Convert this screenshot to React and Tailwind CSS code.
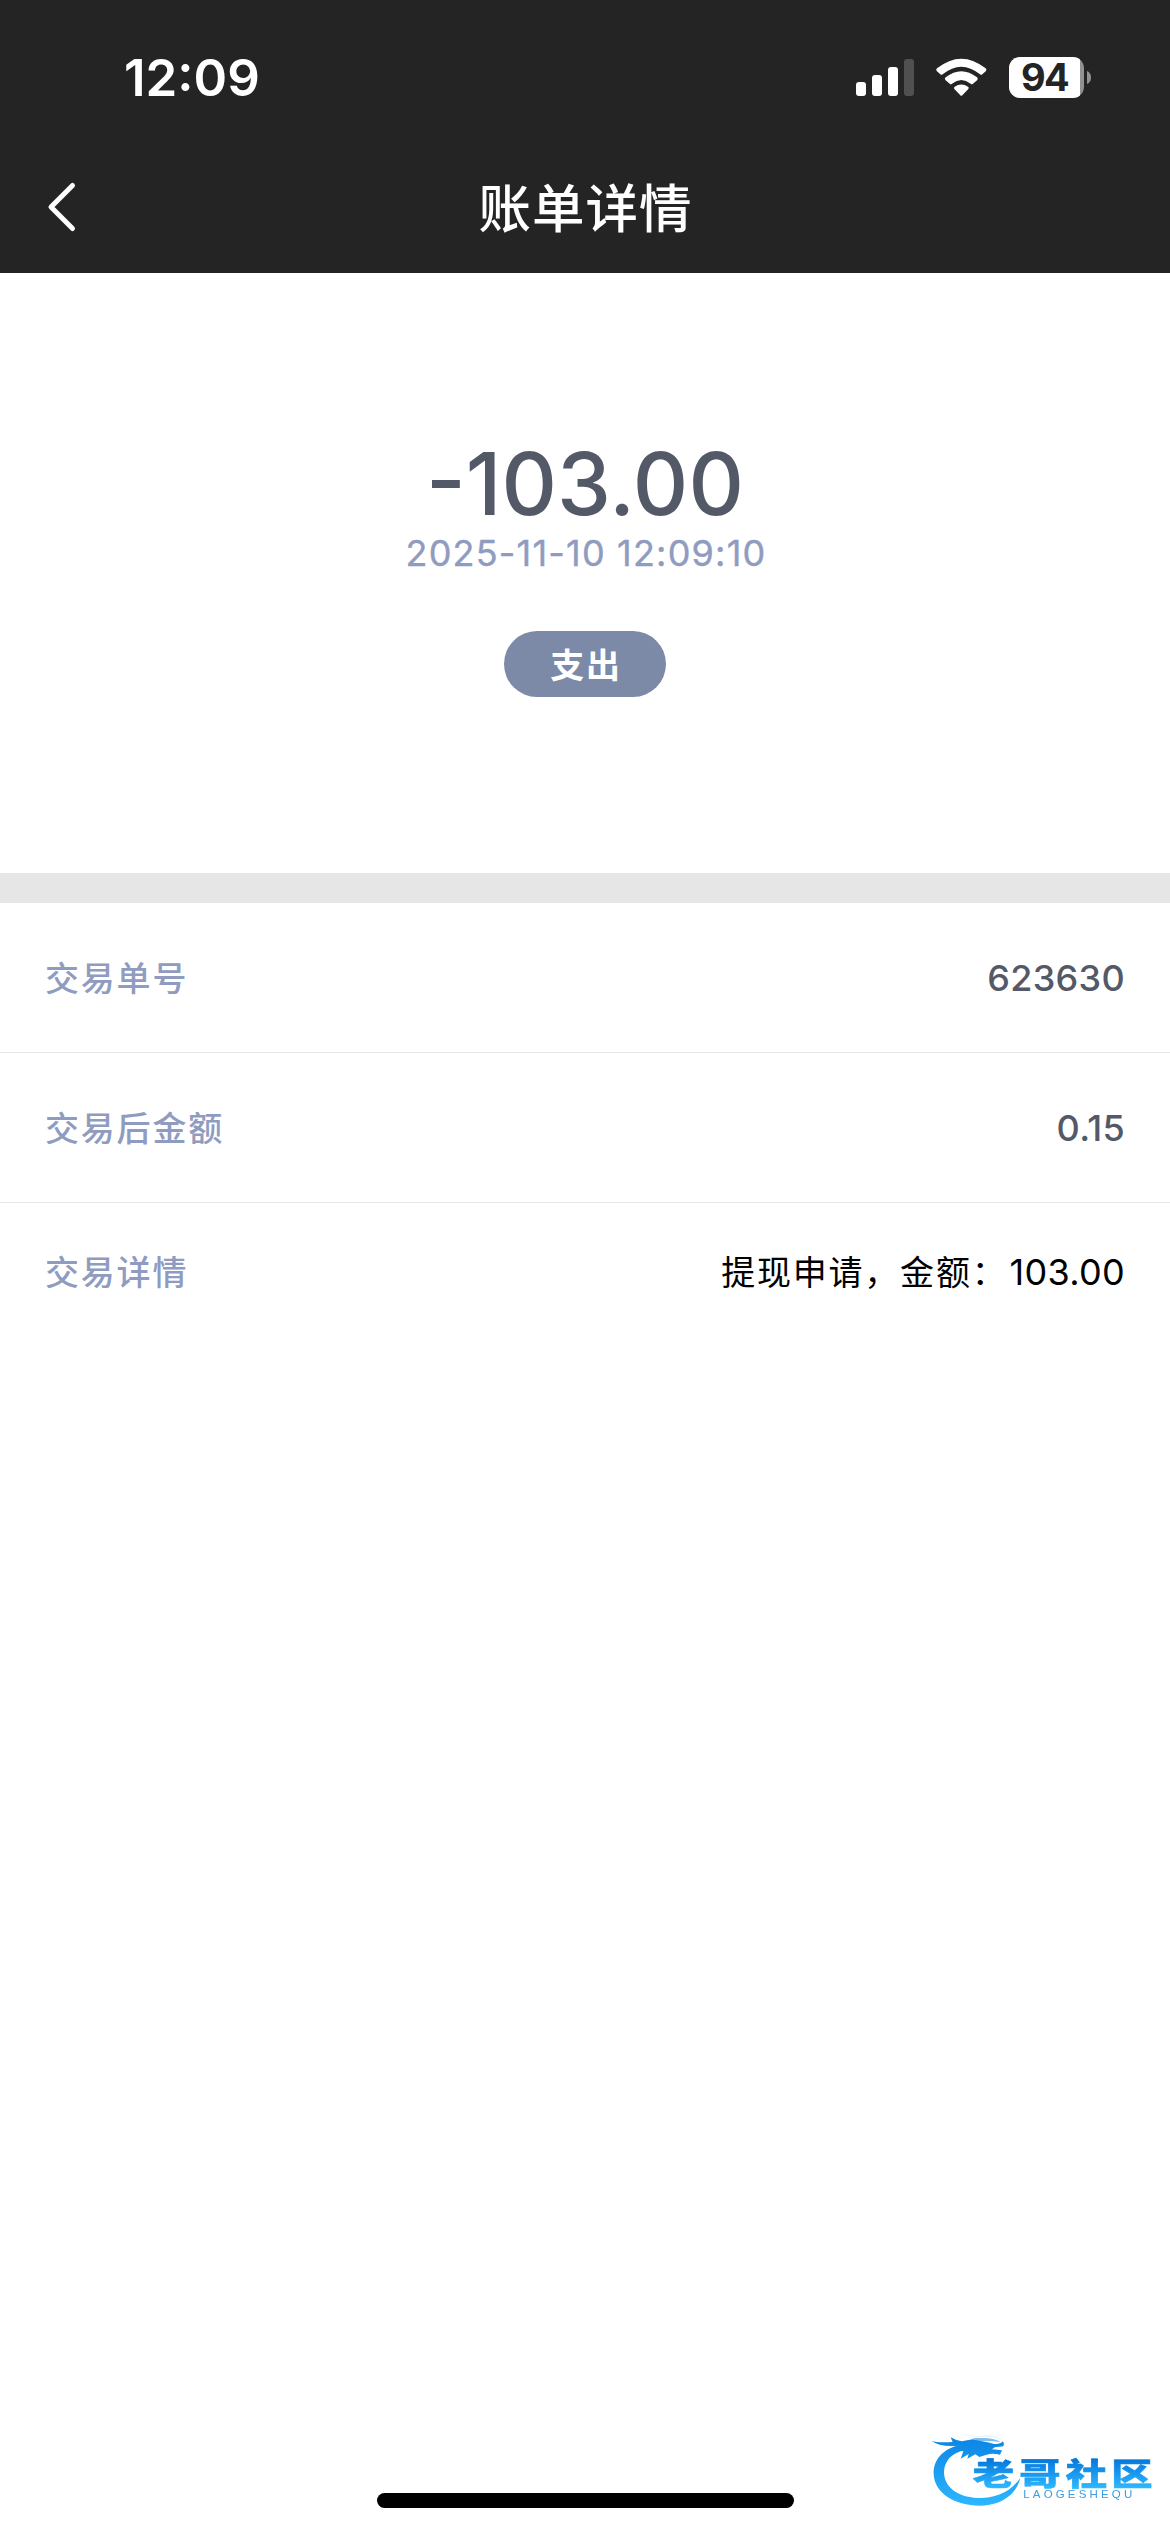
const fontStack = "font-['Inter','Noto_Sans_CJK_SC',sans-serif]";

function StatusIcons() {
  return (
    <svg className="h-[100px] w-[300px]" viewBox="0 0 900 300" fill="none">
      <g fill="#fff">
        <rect x="108" y="156" width="30" height="42" rx="9" />
        <rect x="156" y="135" width="30" height="63" rx="9" />
        <rect x="204" y="111" width="30" height="87" rx="9" />
        <rect x="252" y="87" width="30" height="111" rx="9" fill="#505050" />
        <path d="M350 123 Q347 119 351 115 Q424 57 497 115 Q501 119 498 123 L487 133 Q484 136 480 133 Q424 87 368 133 Q364 136 361 133 Z" />
        <path d="M376 150 Q373 146 377 142 Q424 106 471 142 Q475 146 472 150 L459 161 Q456 164 452 161 Q424 139 396 161 Q392 164 389 161 Z" />
        <path d="M403 177 Q400 173 404 170 Q424 157 444 170 Q448 173 445 177 L427 196 Q424 199 421 196 Z" />
      </g>
      <clipPath id="battery">
        <rect x="567" y="81" width="225" height="123" rx="34" />
      </clipPath>
      <g clipPath="url(#battery)">
        <rect x="567" y="81" width="225" height="123" fill="#919191" />
        <rect x="567" y="81" width="213" height="123" fill="#fff" />
      </g>
      <path d="M801 123 Q813 128 813 142 Q813 157 801 162 Z" fill="#919191" />
      <text
        x="676"
        y="183"
        textAnchor="middle"
        fill="#242424"
        textLength="146"
        className="font-['Inter'] text-[114px] font-bold"
      >
        94
      </text>
    </svg>
  );
}

function Row({ label, value, className, valueClass }) {
  return (
    <div className={`flex items-center justify-between pr-[45px] pl-[45px] ${className}`}>
      <span className="pt-[2px] text-[34px] leading-[48px] font-medium tracking-[1.8px] text-[#909cbf]">{label}</span>
      <span className={`text-[36px] leading-[48px] ${valueClass}`}>{value}</span>
    </div>
  );
}

function Watermark() {
  return (
    <svg className="absolute right-0 bottom-0 h-[122px] w-[260px] blur-[0.7px]" viewBox="0 0 780 366">
      <defs>
        <linearGradient id="ring" x1="0" y1="80" x2="0" y2="290" gradientUnits="userSpaceOnUse">
          <stop offset="0" stopColor="#0a84e4" />
          <stop offset="1" stopColor="#2db8ff" />
        </linearGradient>
        <linearGradient id="name" x1="0" y1="-88" x2="0" y2="10" gradientUnits="userSpaceOnUse">
          <stop offset="0" stopColor="#0678dc" />
          <stop offset="1" stopColor="#2db8ff" />
        </linearGradient>
      </defs>
      <g fill="url(#ring)">
        <path d="M150 104 C96 118 70 150 71 192 C73 248 132 288 214 287 C272 285 318 256 331 204 C306 240 268 262 214 264 C150 264 104 236 102 188 C102 152 126 128 166 120 Z" />
        <path d="M65 92 Q80 99 128 96 L122 82 Q138 92 156 94 Q176 88 196 90 L216 94 Q238 98 252 102 Q270 104 279 94 Q284 102 280 109 L254 112 L246 118 L276 121 L270 134 Q246 128 230 134 L208 141 L196 133 L172 146 L176 132 L152 146 L160 124 L134 118 L148 107 Q88 112 65 92 Z" />
        <path d="M176 92 Q186 82 206 84 Q250 82 272 96 Q236 92 206 94 Z" opacity=".55" />
        <path d="M148 70 Q186 78 206 78 Q256 68 280 92 Q250 76 206 82 Q176 82 148 70 Z" opacity=".08" />
      </g>
      <g fill="url(#name)" stroke="url(#name)" strokeWidth="2" className="font-['Noto_Sans_CJK_SC'] text-[106px] font-black">
        <text transform="translate(188 225) scale(1.17 .87)">老</text>
        <text transform="translate(328 225) scale(1.17 .87)">哥</text>
        <text transform="translate(467 225) scale(1.17 .87)">社</text>
        <text transform="translate(604 225) scale(1.17 .87)">区</text>
      </g>
      <text
        transform="translate(340 264) scale(1.15 1)"
        textLength="284"
        fill="#3d9ce2"
        className="font-['Liberation_Sans'] text-[30px]"
      >
        LAOGESHEQU
      </text>
    </svg>
  );
}

export default function App() {
  return (
    <div className={`relative flex h-[2532px] w-[1170px] flex-col overflow-hidden bg-white ${fontStack}`}>
      <header className="h-[273px] bg-[#242424] text-white">
        <div className="flex h-[141px] items-start justify-between pr-[50px] pl-[124px]">
          <span className="mt-[45px] text-[51px] leading-[66px] font-semibold">12:09</span>
          <div className="pt-[30px]">
            <StatusIcons />
          </div>
        </div>
        <div className="grid h-[132px] grid-cols-[120px_1fr_120px] items-center">
          <svg className="ml-[46px] h-[56px] w-[32px]" viewBox="0 0 32 56" fill="none">
            <path d="M26.5 6.5 L5 28 L26.5 49.5" stroke="#fff" strokeWidth="5" strokeLinecap="round" strokeLinejoin="round" />
          </svg>
          <h1 className="pt-[3px] pl-px text-center text-[52.5px] leading-[66px] font-medium tracking-[1px]">账单详情</h1>
        </div>
      </header>

      <section className="flex h-[600px] flex-col items-center pt-[157px]">
        <div className="text-[86px] leading-[108px] font-medium text-[#535967]">-103.00</div>
        <div className="-mt-[7px] pl-[2px] text-[36px] leading-[44px] tracking-[1.2px] text-[#909cbf] [-webkit-text-stroke:0.4px_#909cbf]">
          2025-11-10 12:09:10
        </div>
        <div className="mt-[56px] flex h-[66px] w-[162px] items-center justify-center rounded-full bg-[#7c89a7] pt-[2px] pl-[2px] text-[34px] font-bold tracking-[1.8px] text-white">
          支出
        </div>
      </section>

      <div className="h-[30px] bg-[#e6e6e6]" />

      <section>
        <Row label="交易单号" value="623630" className="h-[150px] border-b border-[#e6e6e6]" valueClass="font-medium tracking-[0.3px] text-[#535967]" />
        <Row label="交易后金额" value="0.15" className="h-[150px] border-b border-[#e6e6e6]" valueClass="font-medium tracking-[0.3px] text-[#535967]" />
        <Row
          label="交易详情"
          value={
            <>
              <span className="mr-[2px] text-[34px] tracking-[1.8px]">提现申请，金额：</span>103.00
            </>
          }
          className="h-[138px]"
          valueClass="tracking-[0.3px] text-black"
        />
      </section>

      <div className="mx-auto mt-auto mb-[24px] h-[15px] w-[417px] rounded-full bg-black" />
      <Watermark />
    </div>
  );
}
